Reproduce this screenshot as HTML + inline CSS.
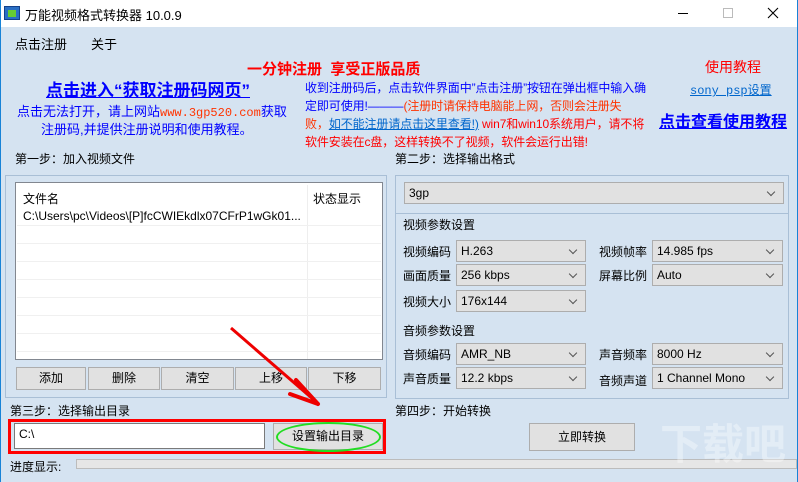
<!DOCTYPE html>
<html><head><meta charset="utf-8"><style>
*{margin:0;padding:0;box-sizing:border-box}
html,body{width:798px;height:482px;overflow:hidden}
body{position:relative;background:#d5e3f1;font-family:"Liberation Sans","Noto Sans CJK SC",sans-serif;font-size:12px;color:#000}
.a{position:absolute;white-space:nowrap}
.cb{position:absolute;background:#e1e1e1;border:1px solid #adadad;height:22px;padding-left:4px;line-height:20px;font-size:12px}
.cb:after{content:"";position:absolute;right:9px;top:6px;width:5px;height:5px;border-right:1px solid #555;border-bottom:1px solid #555;transform:rotate(45deg)}
.btn{position:absolute;background:#e1e1e1;border:1px solid #adadad;text-align:center;line-height:21px;font-size:12px}
.grp{position:absolute;border:1px solid #a9bfd6}
.row{position:absolute;left:1px;right:1px;height:1px;background:#f0f0f0}
</style></head><body>
<div class="a" style="left:0;top:0;width:798px;height:27px;background:#fff"></div>
<div class="a" style="left:0;top:0;width:1px;height:482px;background:#1883d7"></div>
<div class="a" style="left:797px;top:0;width:1px;height:482px;background:#1883d7"></div>
<div class="a" style="left:4px;top:6px;width:16px;height:14px;background:#2a6fc4;border:1px solid #14418a"><div style="position:absolute;left:3px;top:3px;width:8px;height:7px;background:#6c3"></div></div>
<div class="a" style="left:25px;top:5px;font-size:13px">万能视频格式转换器 10.0.9</div>
<div class="a" style="left:678px;top:13px;width:10px;height:1px;background:#000"></div>
<div class="a" style="left:723px;top:8px;width:10px;height:10px;border:1px solid #bbb"></div>
<svg class="a" style="left:767px;top:7px" width="12" height="12"><path d="M1 1L11 11M11 1L1 11" stroke="#000" stroke-width="1.1"/></svg>

<div class="a" style="left:15px;top:34px;font-size:13px">点击注册</div>
<div class="a" style="left:91px;top:34px;font-size:13px">关于</div>

<div class="a" style="left:247px;top:58px;font-size:15px;font-weight:bold;color:#f00">一分钟注册&nbsp; 享受正版品质</div>
<div class="a" style="left:46px;top:76px;font-size:17px;font-weight:bold;color:#00f;text-decoration:underline">点击进入“获取注册码网页”</div>
<div class="a" style="left:17px;top:101px;font-size:13px;color:#00f">点击无法打开，请上网站<span style="color:#f30;font-family:'Liberation Mono',monospace;font-size:12px">www.3gp520.com</span>获取</div>
<div class="a" style="left:41px;top:119px;font-size:13px;color:#00f">注册码,并提供注册说明和使用教程。</div>

<div class="a" style="left:305px;top:79px;font-size:12px;line-height:18px;color:#00f;letter-spacing:-0.1px">收到注册码后，点击软件界面中”点击注册”按钮在弹出框中输入确<br>定即可使用!———<span style="color:#f30">(注册时请保持电脑能上网，否则会注册失</span><br><span style="color:#f30">败，</span><span style="color:#06c;text-decoration:underline">如不能注册请点击这里查看!)</span><span style="color:#f00"> win7和win10系统用户，请不将</span><br><span style="color:#f00">软件安装在c盘，这样转换不了视频，软件会运行出错!</span></div>
<div class="a" style="left:705px;top:57px;font-size:14px;color:#f00">使用教程</div>
<div class="a" style="left:690px;top:81px;font-size:12px;color:#06c;text-decoration:underline;font-family:'Liberation Mono','Noto Sans CJK SC',monospace">sony psp设置</div>
<div class="a" style="left:659px;top:108px;font-size:16px;font-weight:bold;color:#00f;text-decoration:underline">点击查看使用教程</div>

<div class="a" style="left:15px;top:150px">第一步：加入视频文件</div>
<div class="grp" style="left:5px;top:175px;width:382px;height:223px"></div>
<div class="a" style="left:15px;top:182px;width:368px;height:178px;background:#fff;border:1px solid #828790">
<div class="a" style="left:7px;top:7px">文件名</div>
<div class="a" style="left:297px;top:7px">状态显示</div>
<div class="a" style="left:291px;top:2px;width:1px;height:174px;background:#eee"></div>
<div class="a" style="left:7px;top:26px;color:#000">C:\Users\pc\Videos\[P]fcCWIEkdlx07CFrP1wGk01...</div>
<div class="row" style="top:42px"></div><div class="row" style="top:60px"></div><div class="row" style="top:78px"></div><div class="row" style="top:96px"></div><div class="row" style="top:114px"></div><div class="row" style="top:132px"></div><div class="row" style="top:150px"></div><div class="row" style="top:168px"></div>
</div>
<div class="btn" style="left:16px;top:367px;width:70px;height:23px">添加</div>
<div class="btn" style="left:88px;top:367px;width:72px;height:23px">删除</div>
<div class="btn" style="left:161px;top:367px;width:73px;height:23px">清空</div>
<div class="btn" style="left:235px;top:367px;width:72px;height:23px">上移</div>
<div class="btn" style="left:308px;top:367px;width:73px;height:23px">下移</div>

<div class="a" style="left:395px;top:150px">第二步：选择输出格式</div>
<div class="grp" style="left:395px;top:175px;width:394px;height:224px"></div>
<div class="a" style="left:396px;top:213px;width:392px;height:1px;background:#a9bfd6"></div>
<div class="cb" style="left:404px;top:182px;width:380px">3gp</div>
<div class="a" style="left:403px;top:216px">视频参数设置</div>
<div class="a" style="left:403px;top:243px">视频编码</div><div class="cb" style="left:456px;top:240px;width:130px">H.263</div>
<div class="a" style="left:599px;top:243px">视频帧率</div><div class="cb" style="left:652px;top:240px;width:131px">14.985 fps</div>
<div class="a" style="left:403px;top:267px">画面质量</div><div class="cb" style="left:456px;top:264px;width:130px">256 kbps</div>
<div class="a" style="left:599px;top:267px">屏幕比例</div><div class="cb" style="left:652px;top:264px;width:131px">Auto</div>
<div class="a" style="left:403px;top:293px">视频大小</div><div class="cb" style="left:456px;top:290px;width:130px">176x144</div>
<div class="a" style="left:403px;top:322px">音频参数设置</div>
<div class="a" style="left:403px;top:346px">音频编码</div><div class="cb" style="left:456px;top:343px;width:130px">AMR_NB</div>
<div class="a" style="left:599px;top:346px">声音频率</div><div class="cb" style="left:652px;top:343px;width:131px">8000 Hz</div>
<div class="a" style="left:403px;top:370px">声音质量</div><div class="cb" style="left:456px;top:367px;width:130px">12.2 kbps</div>
<div class="a" style="left:599px;top:372px">音频声道</div><div class="cb" style="left:652px;top:367px;width:131px">1 Channel Mono</div>

<div class="a" style="left:10px;top:402px">第三步：选择输出目录</div>
<div class="a" style="left:8px;top:419px;width:378px;height:35px;border:3px solid #f00"></div>
<div class="a" style="left:14px;top:423px;width:251px;height:26px;background:#fff;border:1px solid #7a7a7a;padding:3px 4px">C:\</div>
<div class="btn" style="left:273px;top:423px;width:110px;height:27px;line-height:25px">设置输出目录</div>
<div class="a" style="left:276px;top:422px;width:105px;height:30px;border:2px solid #2d2;border-radius:50%"></div>
<div class="a" style="left:395px;top:402px">第四步：开始转换</div>
<div class="btn" style="left:529px;top:423px;width:106px;height:28px;line-height:26px">立即转换</div>
<div class="a" style="left:10px;top:458px">进度显示:</div>
<div class="a" style="left:76px;top:459px;width:721px;height:10px;background:#e6e6e6;border:1px solid #bcbcbc"></div>
<div class="a" style="left:660px;top:420px;font-size:42px;line-height:50px;color:rgba(255,255,255,0.35);font-weight:bold">下载吧</div>

<svg class="a" style="left:0;top:0" width="798" height="482"><path d="M231 328L314 400" stroke="#e00" stroke-width="3"/><path d="M318 404L296 380M318 404L290 394" stroke="#e00" stroke-width="4" stroke-linecap="round"/></svg>
</body></html>
